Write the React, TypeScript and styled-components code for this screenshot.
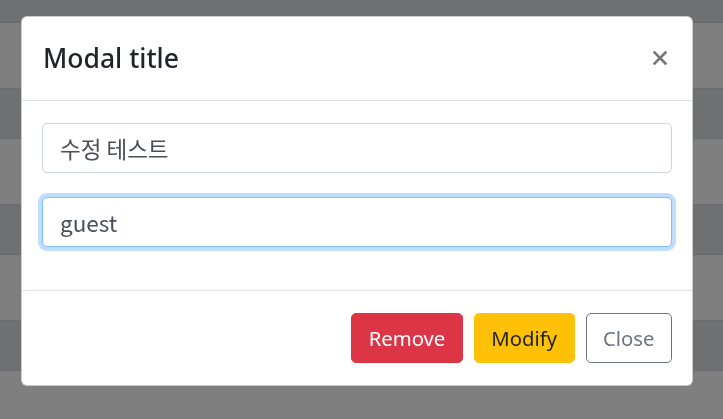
import React from 'react';
import styled, {createGlobalStyle} from 'styled-components';

const GlobalStyle = createGlobalStyle`
  html, body {
    margin: 0;
    padding: 0;
    overflow: hidden;
  }
  body {
    font-family: "Noto Sans", "Noto Sans CJK KR", sans-serif;
    color: #212529;
    background: #fff;
  }
`

const Page = styled.div`
  width: 723px;
  height: 419px;
  overflow: hidden;
`

const Table = styled.div`
  display: flex;
  flex-direction: column;
  width: 100%;
`

const Row = styled.div<{ $h: number; $dark?: boolean }>`
  box-sizing: border-box;
  height: ${p => p.$h}px;
  background: ${p => (p.$dark ? '#dee1e5' : '#ffffff')};
  border-top: 1px solid #d2d5da;
  &:first-child {
    border-top: none;
  }
`

const Backdrop = styled.div`
  position: fixed;
  inset: 0;
  background: rgba(0, 0, 0, 0.5);
`

const ModalWrap = styled.div`
  position: fixed;
  inset: 0;
  padding: 16px 0 0 21px;
`

const Dialog = styled.div`
  width: 672px;
  box-sizing: border-box;
  background: #fff;
  border: 1px solid rgba(0, 0, 0, 0.2);
  border-radius: 6px;
  display: flex;
  flex-direction: column;
`

const Header = styled.div`
  display: flex;
  align-items: center;
  justify-content: space-between;
  padding: 21px 20px 22px 21px;
  border-bottom: 1px solid #dee2e6;
`

const Title = styled.h5`
  margin: 0;
  font-size: 26.5px;
  font-weight: 500;
  line-height: 40px;
  color: #212529;
`

const CloseButton = styled.button`
  display: flex;
  align-items: center;
  justify-content: center;
  width: 24px;
  height: 24px;
  padding: 0;
  border: none;
  background: transparent;
  color: #767676;
`

const Body = styled.div`
  display: flex;
  flex-direction: column;
  gap: 24px;
  padding: 22px 20px 43px 20px;
`

const Input = styled.input<{ $focus?: boolean }>`
  box-sizing: border-box;
  width: 100%;
  height: 50px;
  padding: 0 17px;
  font-family: "Noto Sans CJK KR", "Noto Sans", sans-serif;
  font-size: 22.5px;
  color: #495057;
  background: #fff;
  border: 1px solid ${p => (p.$focus ? '#80bdff' : '#ced4da')};
  border-radius: 5px;
  outline: none;
  box-shadow: ${p => (p.$focus ? '0 0 0 4px rgba(0, 123, 255, 0.25)' : 'none')};
`

const Footer = styled.div`
  display: flex;
  justify-content: flex-end;
  gap: 11px;
  padding: 22px 20px 22px 20px;
  border-top: 1px solid #dee2e6;
`

const Button = styled.button<{ $variant: 'danger' | 'warning' | 'outline' }>`
  box-sizing: border-box;
  height: 50px;
  padding: 0 16.5px;
  font-family: "Noto Sans", sans-serif;
  font-size: 20.3px;
  border-radius: 5px;
  border: 1px solid ${p => ({danger: '#dc3545', warning: '#ffc107', outline: '#6c757d'}[p.$variant])};
  background: ${p => ({danger: '#dc3545', warning: '#ffc107', outline: '#fff'}[p.$variant])};
  color: ${p => ({danger: '#fff', warning: '#212529', outline: '#6c757d'}[p.$variant])};
`

const rows = [
    {h: 22, dark: true},
    {h: 66},
    {h: 50, dark: true},
    {h: 66},
    {h: 50, dark: true},
    {h: 66},
    {h: 50, dark: true},
    {h: 60},
]

const App = () => {
    return (
        <>
            <GlobalStyle/>
            <Page>
                <Table>
                    {rows.map((r, i) => (
                        <Row key={i} $h={r.h} $dark={r.dark}/>
                    ))}
                </Table>
                <Backdrop/>
                <ModalWrap>
                    <Dialog>
                        <Header>
                            <Title>Modal title</Title>
                            <CloseButton aria-label="Close">
                                <svg width="14" height="14" viewBox="0 0 14 14">
                                    <path d="M1.5 1.5 L12.5 12.5 M12.5 1.5 L1.5 12.5" stroke="currentColor"
                                          strokeWidth="2.6" strokeLinecap="square"/>
                                </svg>
                            </CloseButton>
                        </Header>
                        <Body>
                            <Input defaultValue="수정 테스트"/>
                            <Input $focus defaultValue="guest"/>
                        </Body>
                        <Footer>
                            <Button $variant="danger">Remove</Button>
                            <Button $variant="warning">Modify</Button>
                            <Button $variant="outline">Close</Button>
                        </Footer>
                    </Dialog>
                </ModalWrap>
            </Page>
        </>
    );
};

export default App;
